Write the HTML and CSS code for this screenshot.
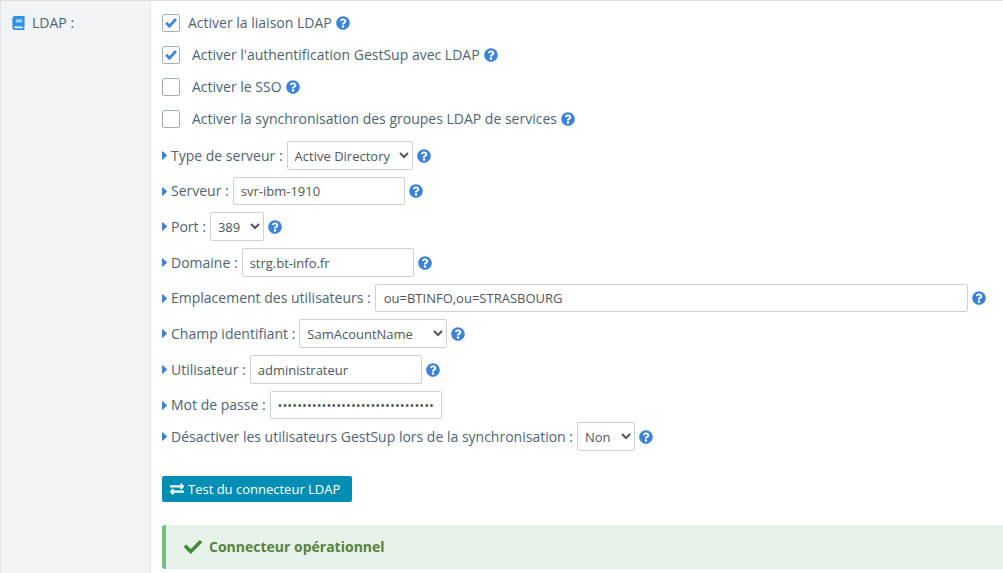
FILE: index.html
```html
<!DOCTYPE html>
<html lang="fr">
<head>
<meta charset="utf-8">
<title>LDAP</title>
<link rel="stylesheet" href="styles.css">
</head>
<body>
<svg class="sprite" aria-hidden="true">
  <symbol id="help" viewBox="0 0 512 512"><path fill="currentColor" d="M504 256c0 136.997-111.043 248-248 248S8 392.997 8 256C8 119.083 119.043 8 256 8s248 111.083 248 248zM262.655 90c-54.497 0-89.255 22.957-116.549 63.758-3.536 5.286-2.353 12.415 2.715 16.258l34.699 26.31c5.205 3.947 12.621 3.008 16.665-2.122 17.864-22.658 30.113-35.797 57.303-35.797 20.429 0 45.698 13.148 45.698 32.958 0 14.976-12.363 22.667-32.534 33.976C247.128 238.528 216 254.941 216 296v4c0 6.627 5.373 12 12 12h56c6.627 0 12-5.373 12-12v-1.333c0-28.462 83.186-29.647 83.186-106.667 0-58.002-60.165-102-116.531-102zM256 338c-25.365 0-46 20.635-46 46 0 25.364 20.635 46 46 46s46-20.636 46-46c0-25.365-20.635-46-46-46z"/></symbol>
  <symbol id="caret" viewBox="0 100 170 312"><path fill="currentColor" d="M0 384.662V127.338c0-17.818 21.543-26.741 34.142-14.142l128.662 128.662c7.81 7.81 7.81 20.474 0 28.284L34.142 398.804C21.543 411.404 0 402.48 0 384.662z"/></symbol>
  <symbol id="book" viewBox="0 0 448 512"><path fill="currentColor" d="M448 360V24c0-13.300-10.700-24-24-24H96C43 0 0 43 0 96v320c0 53 43 96 96 96h328c13.300 0 24-10.700 24-24v-16c0-7.500-3.500-14.300-8.900-18.700-4.200-15.400-4.200-59.300 0-74.700 5.400-4.300 8.900-11.100 8.900-18.600zM128 134c0-3.300 2.700-6 6-6h212c3.300 0 6 2.700 6 6v20c0 3.300-2.700 6-6 6H134c-3.300 0-6-2.700-6-6v-20zm0 64c0-3.300 2.700-6 6-6h212c3.300 0 6 2.700 6 6v20c0 3.300-2.700 6-6 6H134c-3.300 0-6-2.700-6-6v-20zm253.400 250H96c-17.700 0-32-14.300-32-32 0-17.600 14.400-32 32-32h285.400c-1.900 17.100-1.900 46.900 0 64z"/></symbol>
  <symbol id="check" viewBox="0 0 512 512"><path fill="currentColor" d="M173.898 439.404l-166.400-166.400c-9.997-9.997-9.997-26.206 0-36.204l36.203-36.204c9.997-9.998 26.207-9.998 36.204 0L192 312.690 432.095 72.596c9.997-9.997 26.207-9.997 36.204 0l36.203 36.204c9.997 9.997 9.997 26.206 0 36.204l-294.400 294.401c-9.998 9.997-26.207 9.997-36.204-.001z"/></symbol>
  <symbol id="exchange" viewBox="0 0 512 512"><path fill="currentColor" stroke="currentColor" stroke-width="16" d="M0 168v-16c0-13.255 10.745-24 24-24h360V80c0-21.367 25.899-32.042 40.971-16.971l80 80c9.372 9.373 9.372 24.569 0 33.941l-80 80C409.956 271.982 384 261.456 384 240v-48H24c-13.255 0-24-10.745-24-24zm488 152H128v-48c0-21.314-25.862-32.080-40.971-16.971l-80 80c-9.372 9.373-9.372 24.569 0 33.941l80 80C102.057 463.997 128 453.437 128 432v-48h360c13.255 0 24-10.745 24-24v-16c0-13.255-10.745-24-24-24z"/></symbol>
</svg>
<main class="panel">
  <h1 class="section-title"><svg class="book"><use href="#book"/></svg>LDAP :</h1>
  <form class="settings">
    <div class="checks">
      <div class="row"><input class="box" type="checkbox" id="liaison" checked><label class="main-option" for="liaison">Activer la liaison LDAP</label><svg class="help"><use href="#help"/></svg></div>
      <div class="row"><input class="box" type="checkbox" id="auth" checked><label class="option" for="auth">Activer l'authentification GestSup avec LDAP</label><svg class="help"><use href="#help"/></svg></div>
      <div class="row"><input class="box" type="checkbox" id="sso"><label class="option" for="sso">Activer le SSO</label><svg class="help"><use href="#help"/></svg></div>
      <div class="row"><input class="box" type="checkbox" id="groupes"><label class="option" for="groupes">Activer la synchronisation des groupes LDAP de services</label><svg class="help"><use href="#help"/></svg></div>
    </div>
    <div class="fields">
      <div class="row"><svg class="caret"><use href="#caret"/></svg><label class="name" for="type">Type de serveur :</label><select class="control select-type" id="type"><option>Active Directory</option></select><svg class="help"><use href="#help"/></svg></div>
      <div class="row"><svg class="caret"><use href="#caret"/></svg><label class="name" for="serveur">Serveur :</label><input class="control text short" type="text" id="serveur" value="svr-ibm-1910"><svg class="help"><use href="#help"/></svg></div>
      <div class="row"><svg class="caret"><use href="#caret"/></svg><label class="name" for="port">Port :</label><select class="control select-port" id="port"><option>389</option></select><svg class="help"><use href="#help"/></svg></div>
      <div class="row"><svg class="caret"><use href="#caret"/></svg><label class="name" for="domaine">Domaine :</label><input class="control text" type="text" id="domaine" value="strg.bt-info.fr"><svg class="help"><use href="#help"/></svg></div>
      <div class="row"><svg class="caret"><use href="#caret"/></svg><label class="name" for="emplacement">Emplacement des utilisateurs :</label><input class="control wide short" type="text" id="emplacement" value="ou=BTINFO,ou=STRASBOURG"><svg class="help"><use href="#help"/></svg></div>
      <div class="row"><svg class="caret"><use href="#caret"/></svg><label class="name" for="champ">Champ identifiant :</label><select class="control select-champ" id="champ"><option>SamAcountName</option></select><svg class="help"><use href="#help"/></svg></div>
      <div class="row"><svg class="caret"><use href="#caret"/></svg><label class="name" for="utilisateur">Utilisateur :</label><input class="control text" type="text" id="utilisateur" value="administrateur"><svg class="help"><use href="#help"/></svg></div>
      <div class="row"><svg class="caret"><use href="#caret"/></svg><label class="name" for="passe">Mot de passe :</label><input class="control text short" type="password" id="passe" value="00000000000000000000000000000000"></div>
    </div>
    <div class="row sync"><svg class="caret"><use href="#caret"/></svg><label class="name" for="sync">Désactiver les utilisateurs GestSup lors de la synchronisation :</label><select class="control select-sync" id="sync"><option>Non</option></select><svg class="help"><use href="#help"/></svg></div>
    <button class="test" type="button"><svg class="exchange"><use href="#exchange"/></svg>Test du connecteur LDAP</button>
    <div class="alert" role="status"><svg class="ok"><use href="#check"/></svg><strong>Connecteur opérationnel</strong></div>
  </form>
</main>
</body>
</html>
```
FILE: styles.css
```css
* { box-sizing: border-box; }
body {
  margin: 0;
  background: #fff;
  color: #4d6575;
  font: 14px/20px "Open Sans", sans-serif;
}
.sprite { display: none; }
svg { flex: none; }
.panel {
  display: grid;
  grid-template-columns: 150px 1fr;
  min-height: 100vh;
  border: solid #dee0e3;
  border-width: 1px 0 0 1px;
}
.section-title {
  display: flex;
  align-items: flex-start;
  margin: 0;
  padding: 12px 11px;
  background: #f1f3f5;
  border-right: 1px solid #e6e8ea;
  font-size: 14px;
  font-weight: 400;
}
.book { width: 13px; height: 14px; margin: 3px 7px 0 0; color: #2e93ee; }
.settings { min-width: 0; padding: 12px 0 4px 11px; }
.row { display: flex; align-items: center; }
.checks { display: grid; gap: 12px; }
.box {
  appearance: none;
  width: 18px;
  height: 18px;
  margin: 1px 0;
  border: 1px solid #a2b0bd;
  border-radius: 2px;
  background: #fff;
}
.box:checked {
  background: url("data:image/svg+xml,%3Csvg xmlns='http://www.w3.org/2000/svg' viewBox='0 0 12 12'%3E%3Cpath d='M1.200 5.800l3.200 3.300 6.500-7.100' fill='none' stroke='%233b85e0' stroke-width='2.800'/%3E%3C/svg%3E") center / 12px no-repeat;
}
.main-option { margin-left: 8px; }
.option { margin-left: 12px; }
.help { width: 14px; height: 14px; margin-left: 4px; color: #3a83d8; }
.fields { display: grid; gap: 7px; margin-top: 12px; }
.caret { width: 5px; height: 9px; margin-right: 4px; color: #3a83d8; }
.name { white-space: nowrap; }
.control {
  height: 29px;
  margin-left: 4px;
  padding: 0 7px;
  border: 1px solid #d0d0d0;
  border-radius: 2px;
  background: #fff;
  color: #50565e;
  font: 13px "Open Sans", sans-serif;
}
select.control { padding: 0 3px; }
.short { height: 28px; }
.text { width: 172px; }
.wide { flex: 1; min-width: 0; padding: 0 8px; }
.wide + .help { margin-right: 17px; }
.select-type { width: 126px; }
.select-port { width: 54px; }
.select-champ { width: 148px; }
.select-sync { width: 58px; }
.sync { margin-top: 3px; }
.test {
  display: flex;
  align-items: center;
  gap: 4px;
  min-width: 190px;
  height: 26px;
  margin-top: 25px;
  padding: 0 8px;
  border: 0;
  border-radius: 2px;
  background: #008eb5;
  color: #fff;
  font: 13px "Open Sans", sans-serif;
}
.exchange { width: 14px; height: 14px; }
.alert {
  display: flex;
  align-items: center;
  gap: 7px;
  height: 44px;
  margin-top: 23px;
  padding-left: 18px;
  border-left: 4px solid #76bf7b;
  border-radius: 3px 0 0 3px;
  background: #e7f3e8;
  color: #568240;
}
.ok { width: 18px; height: 18px; color: #458b3f; }
```
